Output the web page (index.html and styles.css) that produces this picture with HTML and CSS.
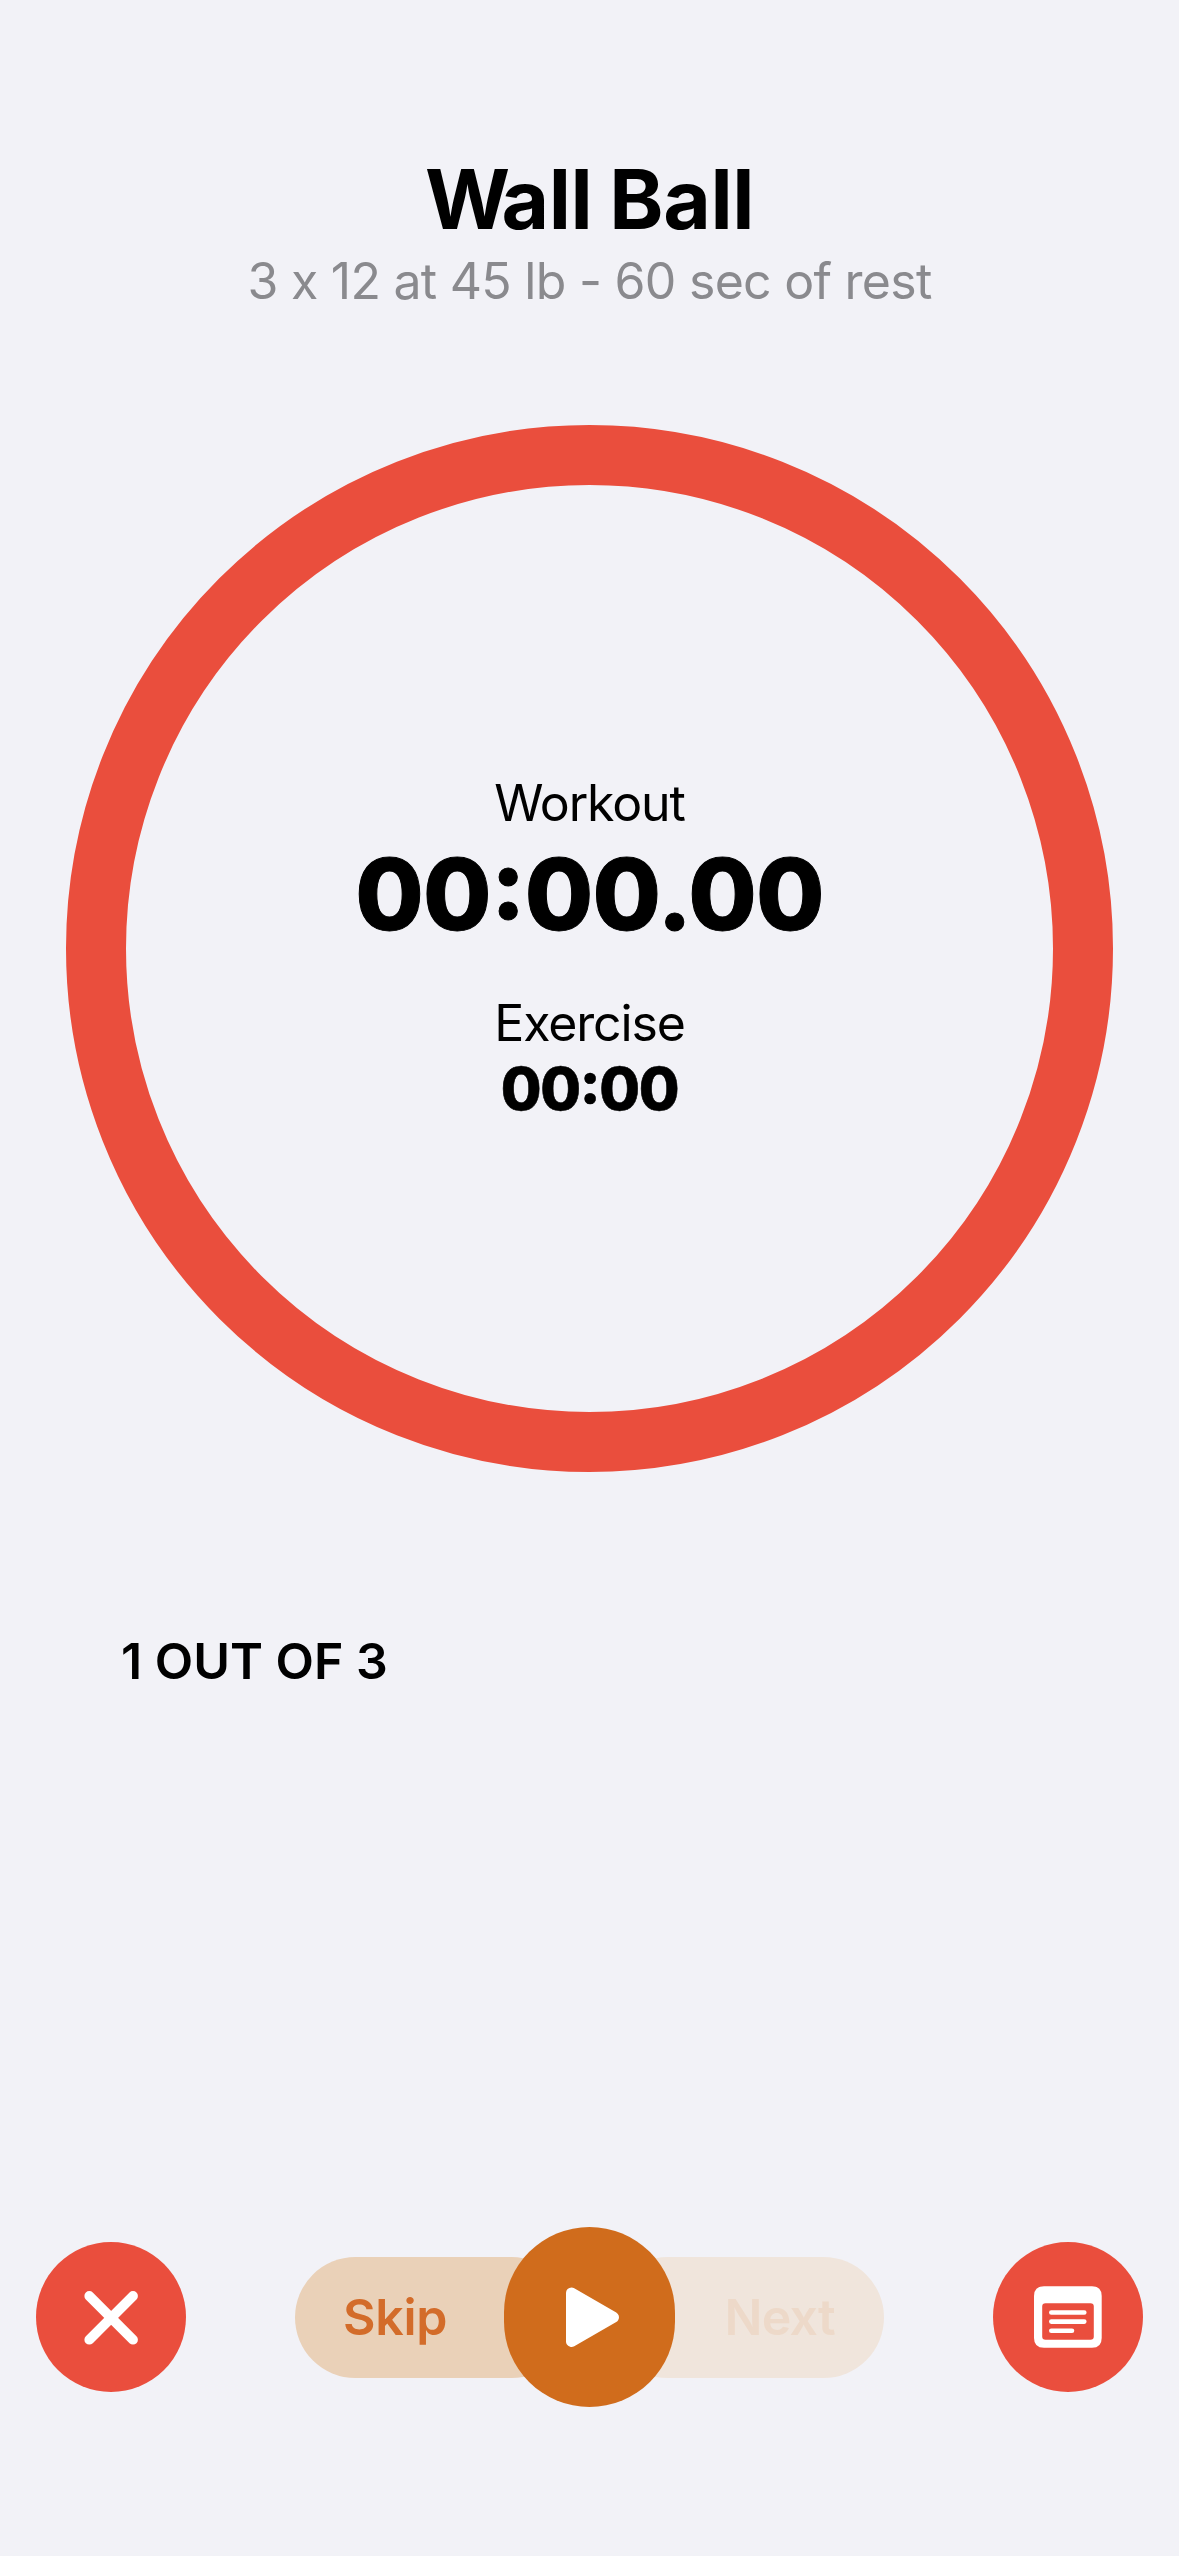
FILE: index.html
```html
<!DOCTYPE html>
<html lang="en">
<head>
<meta charset="utf-8">
<title>Wall Ball</title>
<link rel="stylesheet" href="styles.css">
</head>
<body>
<main class="screen">
  <header class="header">
    <h1 class="title"><span class="kern">W</span>all Ball</h1>
    <p class="subtitle">3 x 12 at 45 lb - 60 sec of rest</p>
  </header>
  <section class="ring">
    <span class="label label-workout">Workout</span>
    <span class="time-main">00:00.00</span>
    <span class="label label-exercise">Exercise</span>
    <span class="time-sub">00:00</span>
  </section>
  <p class="progress">1 OUT OF 3</p>
  <nav class="controls">
    <button class="round" aria-label="Close">
      <svg width="150" height="150" viewBox="0 0 150 150" fill="none" stroke="#fff" stroke-width="9.8" stroke-linecap="round"><path d="M53.3 54L97 97.700M97 54L53.3 97.700"/></svg>
    </button>
    <div class="transport">
      <button class="pill skip">Skip</button>
      <button class="play" aria-label="Play">
        <svg width="171" height="180" viewBox="0 0 171 180"><path fill="#fff" stroke="#fff" stroke-width="11" stroke-linejoin="round" d="M67.500 66L109.500 90.200L67.500 114.500Z"/></svg>
      </button>
      <button class="pill next" disabled>Next</button>
    </div>
    <button class="round" aria-label="Notes">
      <svg width="150" height="150" viewBox="0 0 150 150"><path fill="#fff" fill-rule="evenodd" d="M51 44.200H99Q108.700 44.200 108.700 54V96Q108.700 105.800 99 105.800H51Q41 105.800 41 96V54Q41 44.200 51 44.200ZM52.500 61.200Q49.200 61.200 49.200 64.500V94.500Q49.200 97.800 52.500 97.800H97.500Q100.800 97.800 100.800 94.500V64.500Q100.800 61.200 97.500 61.200Z"/><path stroke="#fff" stroke-width="4.600" stroke-linecap="round" d="M58.300 70.500H91.300M58.300 79.600H91.300M58.300 88.800H79"/></svg>
    </button>
  </nav>
</main>
</body>
</html>
```
FILE: styles.css
```css
* { box-sizing: border-box; margin: 0; padding: 0; }

body {
  background: #f2f2f7;
  color: #000;
  font-family: Inter, "Liberation Sans", sans-serif;
}

.screen {
  display: flex;
  flex-direction: column;
  height: 2556px;
  padding: 151px 36px 149px;
}

.header { text-align: center; }

.title {
  font-size: 82px;
  line-height: 98px;
  font-weight: 700;
  letter-spacing: -0.4px;
  word-spacing: -2px;
}

.kern { letter-spacing: -8.5px; }

.subtitle {
  margin-top: 2px;
  color: #8a8a8e;
  font-size: 50px;
  line-height: 60px;
  letter-spacing: -0.73px;
  font-feature-settings: "calt" 0;
}

.ring {
  display: flex;
  flex-direction: column;
  align-items: center;
  justify-content: center;
  align-self: center;
  width: 1047px;
  height: 1047px;
  margin-top: 114px;
  border: 60px solid #ea4e3d;
  border-radius: 50%;
}

.label {
  font-size: 50px;
  line-height: 60px;
  letter-spacing: -1.15px;
}

.time-main,
.time-sub {
  font-weight: 800;
  font-feature-settings: "calt" 1;
}

.time-main {
  margin-top: 2px;
  font-size: 99px;
  line-height: 119px;
  letter-spacing: -0.8px;
  -webkit-text-stroke: 1px #000;
}

.label-exercise { margin-top: 39px; }

.time-sub {
  font-size: 59px;
  line-height: 71px;
  letter-spacing: -1.3px;
  -webkit-text-stroke: 0.6px #000;
}

.progress {
  margin: 159px 0 0 85px;
  font-size: 50px;
  line-height: 60px;
  font-weight: 600;
}

.controls {
  display: flex;
  align-items: center;
  justify-content: space-between;
  margin-top: auto;
}

button {
  border: 0;
  font: inherit;
}

svg { display: block; }

.round {
  width: 150px;
  height: 150px;
  border-radius: 50%;
  background: #ea4e3d;
}

.transport {
  display: flex;
  align-items: center;
}

.pill {
  width: 277px;
  height: 121px;
  border-radius: 60.5px;
  font-size: 50px;
  line-height: 60px;
  font-weight: 600;
}

.skip {
  padding-left: 48px;
  background: #ead1b8;
  color: #d36c2a;
  letter-spacing: -0.3px;
  text-align: left;
}

.next {
  padding-right: 49px;
  background: #f0e5dc;
  color: #edd9c9;
  letter-spacing: -0.7px;
  text-align: right;
}

.play {
  z-index: 1;
  width: 171px;
  height: 180px;
  margin: 0 -68px;
  border-radius: 85.5px;
  background: #d06c1c;
}
```
